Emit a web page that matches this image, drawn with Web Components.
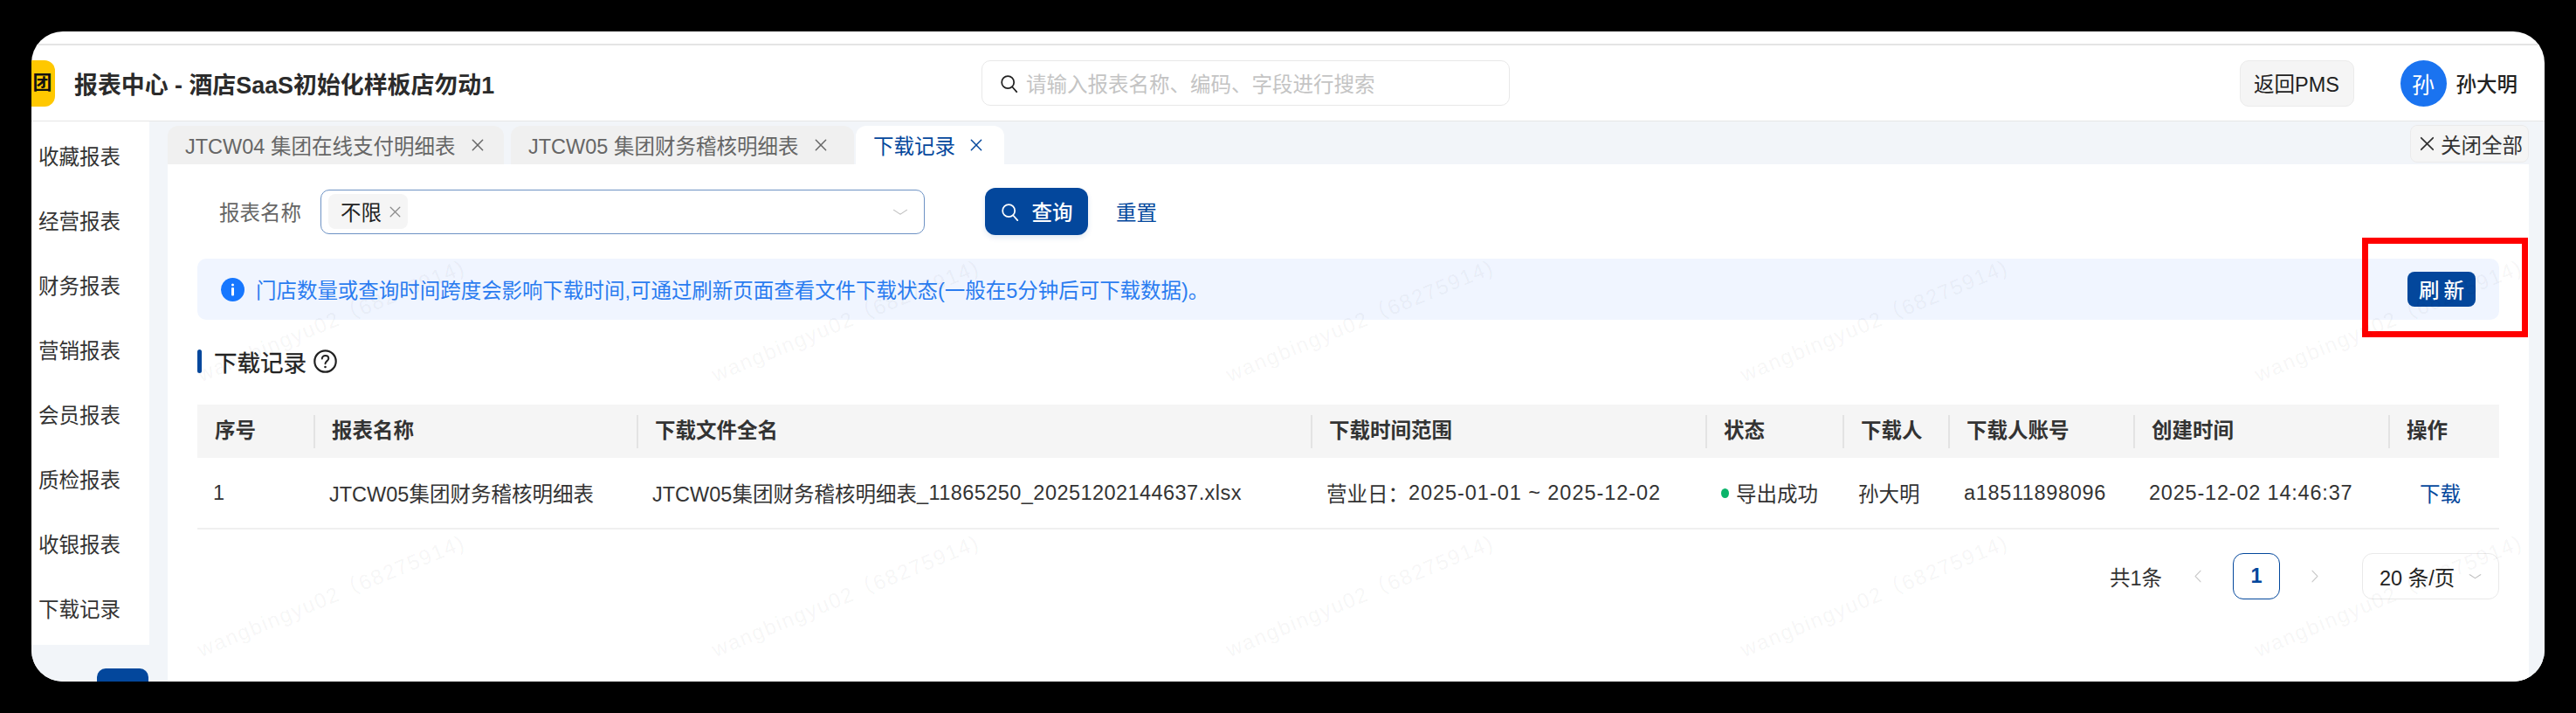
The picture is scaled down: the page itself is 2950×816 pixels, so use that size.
<!DOCTYPE html>
<html lang="zh-CN">
<head>
<meta charset="utf-8">
<title>下载记录</title>
<style>
  html, body { margin: 0; background: #000; }
  body { padding: 36px; width: 2878px; height: 744px; overflow: hidden; font: 23.5px "Liberation Sans", "Noto Sans CJK SC", sans-serif; color: #333; }
</style>
</head>
<body>
<app-window>
  <top-bar></top-bar>
  <div slot="main" style="display:contents">
    <side-nav></side-nav>
    <report-panel></report-panel>
  </div>
</app-window>

<script>
const BLUE = "#03479c";

// icon set, all drawn in a 24x24 box
const ICONS = {
  search: `<circle cx="10.5" cy="10.5" r="8"/><path d="M16.3 16.6 22 23"/>`,
  close: `<path d="M3.5 3.5 20.5 20.5M20.5 3.5 3.5 20.5"/>`,
  down: `<path d="M2 7 12 18 22 7"/>`,
  left: `<path d="M18 2 6 12 18 22"/>`,
  right: `<path d="M6 2 18 12 6 22"/>`,
};

class UiIcon extends HTMLElement {
  connectedCallback() {
    const size = this.getAttribute("size") || 20;
    const stroke = this.getAttribute("stroke") || 2;
    const color = this.getAttribute("color") || "currentColor";
    this.attachShadow({ mode: "open" });
    this.shadowRoot.innerHTML = `
      <style>:host { display: inline-flex; flex: none; } svg { display: block; }</style>
      <svg width="${size}" height="${this.getAttribute("h") || size}" viewBox="0 0 24 24" preserveAspectRatio="none" fill="none" stroke="${color}" stroke-width="${stroke}" stroke-linecap="round" stroke-linejoin="round">${ICONS[this.getAttribute("name")]}</svg>`;
  }
}
customElements.define("ui-icon", UiIcon);

class AppWindow extends HTMLElement {
  constructor() {
    super();
    this.attachShadow({ mode: "open" });
    this.shadowRoot.innerHTML = `
      <style>
        :host { display: flex; flex-direction: column; position: relative; width: 2878px; height: 744px; background: #fff; border-radius: 36px; overflow: hidden; }
        .line { height: 14px; border-bottom: 2px solid #e4e4e4; flex: none; }
        .main { display: flex; flex: 1; min-height: 0; }
      </style>
      <div class="line"></div>
      <slot></slot>
      <div class="main"><slot name="main"></slot></div>
      <water-mark></water-mark>`;
  }
}
customElements.define("app-window", AppWindow);

class TopBar extends HTMLElement {
  constructor() {
    super();
    this.attachShadow({ mode: "open" });
    this.shadowRoot.innerHTML = `
      <style>
        :host { display: grid; grid-template-columns: 1088px 605px 1fr; align-items: center; height: 86px; border-bottom: 1px solid #e6e6e6; flex: none; box-sizing: content-box; }
        .brand { display: flex; align-items: center; }
        .logo { width: 27px; height: 53px; background: #ffc800; border-radius: 0 12px 12px 0; display: flex; align-items: center; justify-content: center; padding-right: 2px; box-sizing: border-box; }
        .logo b { font-size: 22px; line-height: 1; color: #111; }
        .title { margin-left: 22px; font-size: 26.9px; font-weight: 600; color: #2b2b2b; white-space: nowrap; }
        .search { height: 52px; box-sizing: border-box; border: 1px solid #e8e8e8; border-radius: 10px; display: flex; align-items: center; padding-left: 20px; color: #c4c4c4; }
        .search span { margin-left: 9px; }
        .right { display: flex; align-items: center; justify-content: flex-end; padding-right: 31px; }
        .back { width: 131px; height: 53px; box-sizing: border-box; background: #f5f5f5; border: 1px solid #ebebeb; border-radius: 10px; display: flex; align-items: center; justify-content: center; color: #222; }
        .avatar { width: 53px; height: 53px; border-radius: 50%; background: #1a73f0; color: #fff; display: flex; align-items: center; justify-content: center; margin-left: 53px; font-size: 26px; }
        .name { margin-left: 11px; color: #222; font-weight: 500; }
      </style>
      <div class="brand"><div class="logo"><b>团</b></div><div class="title">报表中心 - 酒店SaaS初始化样板店勿动1</div></div>
      <div class="search"><ui-icon name="search" size="21" color="#222"></ui-icon><span>请输入报表名称、编码、字段进行搜索</span></div>
      <div class="right"><div class="back">返回PMS</div><div class="avatar">孙</div><div class="name">孙大明</div></div>`;
  }
}
customElements.define("top-bar", TopBar);

class SideNav extends HTMLElement {
  constructor() {
    super();
    const items = ["收藏报表", "经营报表", "财务报表", "营销报表", "会员报表", "质检报表", "收银报表", "下载记录"];
    this.attachShadow({ mode: "open" });
    this.shadowRoot.innerHTML = `
      <style>
        :host { display: block; width: 135px; flex: none; background: #f2f5f9; }
        ul { list-style: none; margin: 0; padding: 4px 0 0; height: 599px; box-sizing: border-box; background: #fff; }
        li { height: 74px; line-height: 74px; padding-left: 8px; color: #333; }
        .fold { width: 59px; height: 40px; margin: 27px 0 0 75px; background: ${BLUE}; border-radius: 10px; }
      </style>
      <ul>${items.map((t) => `<li>${t}</li>`).join("")}</ul>
      <div class="fold"></div>`;
  }
}
customElements.define("side-nav", SideNav);

class ReportPanel extends HTMLElement {
  constructor() {
    super();
    this.attachShadow({ mode: "open" });
    this.shadowRoot.innerHTML = `
      <style>
        :host { display: flex; flex-direction: column; flex: 1; min-width: 0; background: #f2f5f9; padding: 0 18px 0 21px; }
        .card { flex: 1; background: #fff; padding: 27px 34px 0; position: relative; }
      </style>
      <tab-strip></tab-strip>
      <div class="card">
        <filter-bar></filter-bar>
        <notice-bar></notice-bar>
        <section-title></section-title>
        <record-table></record-table>
        <pager-bar></pager-bar>
      </div>`;
  }
}
customElements.define("report-panel", ReportPanel);

class TabStrip extends HTMLElement {
  constructor() {
    super();
    const tab = (text, cls, w, gap) => `<div class="tab ${cls}" style="width:${w}px"><span>${text}</span><ui-icon name="close" size="16" stroke="2.2" style="margin-left:${gap}px"></ui-icon></div>`;
    this.attachShadow({ mode: "open" });
    this.shadowRoot.innerHTML = `
      <style>
        :host { display: flex; height: 49px; flex: none; align-items: flex-end; }
        .tab { height: 44px; box-sizing: border-box; padding-left: 20px; margin-right: 8px; display: flex; align-items: center; background: #f0f0f0; border-radius: 12px 12px 0 0; color: #666; white-space: nowrap; }
        .on { background: #fff; color: ${BLUE}; margin-right: 0; margin-left: -6px; }
        .all { margin-left: auto; align-self: flex-start; margin-top: 4px; width: 136px; height: 43px; box-sizing: border-box; padding-left: 9px; display: flex; align-items: center; background: #f5f5f5; border: 1px solid #ebebeb; border-radius: 8px; color: #333; white-space: nowrap; }
        .all span { margin-left: 6px; }
      </style>
      ${tab("JTCW04 集团在线支付明细表", "", 385, 18)}
      ${tab("JTCW05 集团财务稽核明细表", "", 393, 18)}
      ${tab("下载记录", "on", 170, 16)}
      <div class="all"><ui-icon name="close" size="19" stroke="2.2"></ui-icon><span>关闭全部</span></div>`;
  }
}
customElements.define("tab-strip", TabStrip);

class FilterBar extends HTMLElement {
  constructor() {
    super();
    this.attachShadow({ mode: "open" });
    this.shadowRoot.innerHTML = `
      <style>
        :host { display: flex; align-items: center; height: 54px; padding-left: 25px; }
        label { width: 116px; color: #666; }
        .select { width: 692px; height: 51px; box-sizing: border-box; border: 1.5px solid #6d92c4; border-radius: 10px; display: flex; align-items: center; padding: 0 18px 0 8px; }
        .tag { height: 40px; width: 91px; box-sizing: border-box; padding-left: 14px; background: #f5f5f5; border-radius: 8px; display: flex; align-items: center; color: #222; }
        .tag ui-icon { margin-left: 8px; }
        .select > ui-icon { margin-left: auto; }
        button { font: inherit; border: 0; padding: 0; background: none; }
        .query { width: 118px; height: 54px; margin-left: 69px; background: ${BLUE}; color: #fff; border-radius: 12px; display: flex; align-items: center; justify-content: center; box-shadow: 0 3px 6px rgba(3,71,156,.12); }
        .query span { margin-left: 15px; font-weight: 500; }
        .reset { margin-left: 32px; color: ${BLUE}; }
      </style>
      <label>报表名称</label>
      <div class="select">
        <div class="tag">不限<ui-icon name="close" size="15" stroke="2" color="#8c8c8c"></ui-icon></div>
        <ui-icon name="down" size="18" h="11" stroke="1.8" color="#bdbdbd"></ui-icon>
      </div>
      <button class="query"><ui-icon name="search" size="21"></ui-icon><span>查询</span></button>
      <button class="reset">重置</button>`;
  }
}
customElements.define("filter-bar", FilterBar);

class NoticeBar extends HTMLElement {
  constructor() {
    super();
    this.attachShadow({ mode: "open" });
    this.shadowRoot.innerHTML = `
      <style>
        :host { display: flex; align-items: center; position: relative; height: 70px; margin-top: 27px; padding: 0 27px; background: #f0f5ff; border-radius: 10px; }
        svg { flex: none; display: block; }
        .text { margin-left: 13px; color: #2a7cf0; white-space: nowrap; font-size: 23.47px; }
        .refresh { margin-left: auto; width: 78px; height: 40px; background: ${BLUE}; color: #fff; border-radius: 8px; display: flex; align-items: center; justify-content: center; letter-spacing: 5px; text-indent: 5px; font-weight: 500; }
        .mark { position: absolute; left: 2479px; top: -24px; width: 190px; height: 114px; box-sizing: border-box; border: 7px solid #f00; }
      </style>
      <svg width="27" height="27" viewBox="0 0 27 27"><circle cx="13.5" cy="13.5" r="13.5" fill="#1677ff"/><rect x="12" y="6.5" width="3" height="3" rx="1.5" fill="#fff"/><rect x="12" y="11" width="3" height="9.5" rx="1" fill="#fff"/></svg>
      <div class="text">门店数量或查询时间跨度会影响下载时间,可通过刷新页面查看文件下载状态(一般在5分钟后可下载数据)。</div>
      <div class="refresh">刷新</div>
      <div class="mark"></div>`;
  }
}
customElements.define("notice-bar", NoticeBar);

class SectionTitle extends HTMLElement {
  constructor() {
    super();
    this.attachShadow({ mode: "open" });
    this.shadowRoot.innerHTML = `
      <style>
        :host { display: flex; align-items: center; height: 27px; margin-top: 34px; }
        .bar { width: 5px; height: 27px; border-radius: 3px; background: ${BLUE}; }
        .text { margin-left: 14px; font-size: 26.5px; font-weight: 400; color: #222; -webkit-text-stroke: .3px #222; }
        svg { margin-left: 8px; display: block; }
      </style>
      <div class="bar"></div>
      <div class="text">下载记录</div>
      <svg width="27" height="27" viewBox="0 0 27 27" fill="none" stroke="#222"><circle cx="13.5" cy="13.5" r="12.2" stroke-width="2.2"/><path d="M9.8 10.6c0-2.2 1.7-3.7 3.8-3.7s3.7 1.4 3.7 3.4c0 2.8-3.8 2.9-3.8 6" stroke-width="2" stroke-linecap="round"/><circle cx="13.5" cy="20" r="1.3" fill="#222" stroke="none"/></svg>`;
  }
}
customElements.define("section-title", SectionTitle);

class RecordTable extends HTMLElement {
  constructor() {
    super();
    const heads = ["序号", "报表名称", "下载文件全名", "下载时间范围", "状态", "下载人", "下载人账号", "创建时间", "操作"];
    // digits in the reference run wider than Liberation's, so the number runs get some tracking
    const num = (text, track) => `<span style="letter-spacing:${track}px">${text}</span>`;
    const cells = [
      "1",
      `JTCW05集团财务稽核明细表`,
      `JTCW05集团财务稽核明细表${num("_11865250_20251202144637.xlsx", 0.45)}`,
      `营业日：${num("2025-01-01 ~ 2025-12-02", 0.95)}`,
      `<i class="dot"></i>导出成功`,
      "孙大明",
      num("a18511898096", 0.65),
      num("2025-12-02 14:46:37", 0.8),
      `<a>下载</a>`,
    ];
    this.attachShadow({ mode: "open" });
    this.shadowRoot.innerHTML = `
      <style>
        :host { display: block; margin-top: 36px; --cols: 133px 370px 772px 452px 157px 121px 212px 292px 127px; }
        .row { display: grid; grid-template-columns: var(--cols); align-items: center; white-space: nowrap; }
        .head { height: 61px; background: #f5f5f5; font-weight: 600; color: #333; }
        .head div { height: 61px; line-height: 61px; padding-left: 21px; background: linear-gradient(#e3e3e3, #e3e3e3) left center / 2px 38px no-repeat; }
        .head div:first-child { background: none; padding-left: 20px; }
        .body { height: 82px; box-sizing: border-box; border-bottom: 2px solid #f0f0f0; color: #333; }
        .body div { padding-left: 18px; display: flex; align-items: center; }
        .dot { width: 9px; height: 11px; border-radius: 50%; background: #0bb46a; margin-right: 8px; }
        a { color: ${BLUE}; margin-left: 18px; }
      </style>
      <div class="row head">${heads.map((h) => `<div>${h}</div>`).join("")}</div>
      <div class="row body">${cells.map((c) => `<div>${c}</div>`).join("")}</div>`;
  }
}
customElements.define("record-table", RecordTable);

class PagerBar extends HTMLElement {
  constructor() {
    super();
    this.attachShadow({ mode: "open" });
    this.shadowRoot.innerHTML = `
      <style>
        :host { display: flex; align-items: center; justify-content: flex-end; height: 53px; margin-top: 27px; color: #333; }
        .page { width: 54px; height: 53px; box-sizing: border-box; margin: 0 34px; border: 1.5px solid ${BLUE}; border-radius: 12px; color: ${BLUE}; display: flex; align-items: center; justify-content: center; font-weight: 600; }
        .first { margin-left: 35px; }
        .size { width: 157px; height: 53px; box-sizing: border-box; margin-left: 48px; padding: 0 19px 0 19px; border: 1px solid #e9e9e9; border-radius: 12px; display: flex; align-items: center; justify-content: space-between; color: #222; white-space: nowrap; }
      </style>
      <span>共1条</span>
      <ui-icon class="first" name="left" size="12" h="15" stroke="2" color="#c9c9c9"></ui-icon>
      <div class="page">1</div>
      <ui-icon name="right" size="12" h="15" stroke="2" color="#c9c9c9"></ui-icon>
      <div class="size"><span>20 条/页</span><ui-icon name="down" size="15" h="9" stroke="2" color="#bdbdbd"></ui-icon></div>`;
  }
}
customElements.define("pager-bar", PagerBar);

// tenant watermark laid over the whole window, spots are window coordinates
class WaterMark extends HTMLElement {
  constructor() {
    super();
    const text = "wangbingyu02（68275914)";
    let marks = "";
    for (const y of [405, 720]) {
      for (const x of [196, 785, 1374, 1963, 2552]) {
        marks += `<span style="left:${x}px;top:${y - 24}px">${text}</span>`;
      }
    }
    this.attachShadow({ mode: "open" });
    this.shadowRoot.innerHTML = `
      <style>
        :host { position: absolute; inset: 0; pointer-events: none; overflow: hidden; }
        span { position: absolute; white-space: nowrap; font-size: 24px; line-height: 24px; letter-spacing: 1.6px; color: rgba(0,0,0,.05); transform-origin: 0 100%; transform: rotate(-22.4deg); }
      </style>
      ${marks}`;
  }
}
customElements.define("water-mark", WaterMark);
</script>
</body>
</html>
